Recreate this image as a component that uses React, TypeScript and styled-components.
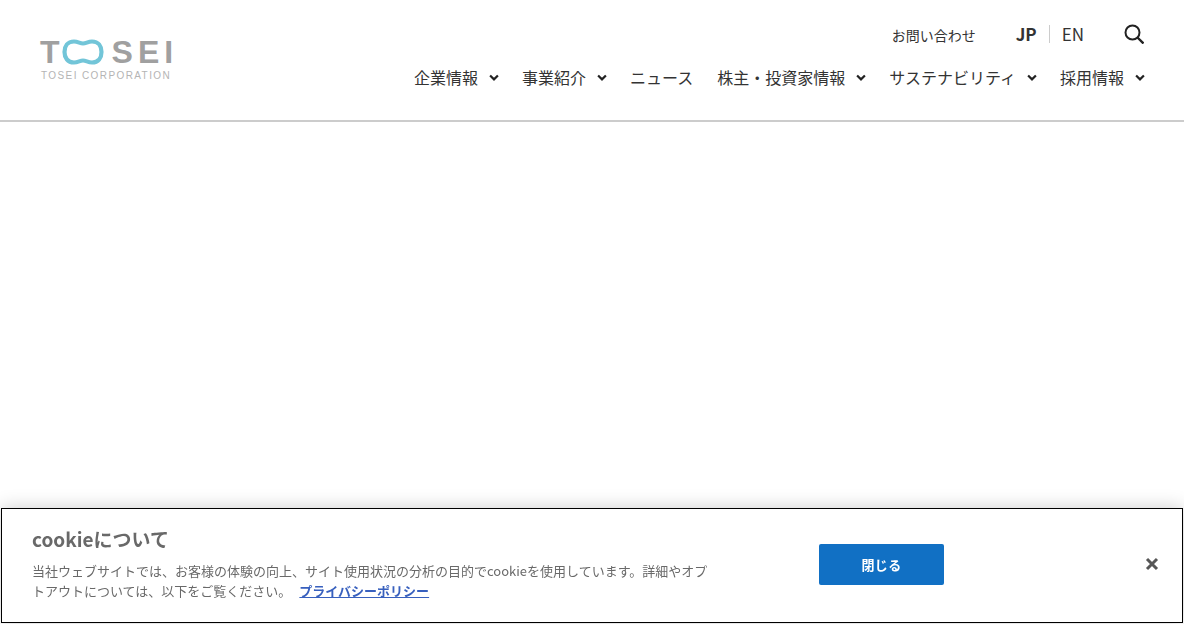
import React from "react";
import styled, { createGlobalStyle } from "styled-components";

const GlobalStyle = createGlobalStyle`
  html, body {
    margin: 0;
    padding: 0;
    background: #fff;
    font-family: "Noto Sans CJK JP", "Noto Sans", sans-serif;
    color: #222;
  }
  * { box-sizing: border-box; }
`;

const Page = styled.div`
  height: 624px;
  overflow: hidden;
`;

const Header = styled.header`
  height: 122px;
  border-bottom: 2px solid #ccc;
  display: flex;
  justify-content: space-between;
  padding: 0 40px;
`;

const Logo = styled.a`
  display: flex;
  flex-direction: column;
  width: 132px;
  margin-top: 38px;
`;

const LogoMark = styled.div`
  display: flex;
  align-items: center;
  height: 28px;
  color: #a0a0a0;
  font-family: "Liberation Sans", sans-serif;
  font-weight: 700;
  font-size: 32px;
  line-height: 28px;
`;

const LogoRing = styled.svg`
  margin-left: 2px;
  flex: none;
`;

const LogoLetters = styled.span`
  letter-spacing: 5px;
  margin-left: 8px;
  white-space: nowrap;
`;

const LogoCaption = styled.span`
  font-family: "Liberation Sans", sans-serif;
  font-size: 10px;
  line-height: 12px;
  letter-spacing: 1.4px;
  color: #b4b4b4;
  margin: 4px 0 0 1px;
  white-space: nowrap;
`;

const Side = styled.div`
  display: flex;
  flex-direction: column;
  align-items: flex-end;
`;

const TopRow = styled.div`
  display: flex;
  align-items: center;
  height: 24px;
  margin-top: 22px;
`;

const ContactLink = styled.a`
  padding-top: 2px;
  font-size: 14px;
  color: #333;
`;

const LangList = styled.div`
  display: flex;
  align-items: center;
  margin-left: 40px;
`;

const Lang = styled.a<{ $active?: boolean }>`
  font-size: 17px;
  font-weight: ${(p) => (p.$active ? 700 : 400)};
  line-height: 18px;
  color: #333;
  padding: ${(p) => (p.$active ? "0 12px 0 0" : "0 0 0 12px")};
  border-left: ${(p) => (p.$active ? "none" : "1px solid #ccc")};
`;

const SearchButton = styled.button`
  display: flex;
  border: none;
  background: none;
  padding: 0;
  margin-left: 40px;
`;

const Nav = styled.nav`
  display: flex;
  align-items: center;
  gap: 24px;
  margin-top: 19px;
`;

const NavItem = styled.a`
  display: flex;
  align-items: center;
  gap: 10px;
  font-size: 16px;
  line-height: 24px;
  color: #333;
  white-space: nowrap;
`;

const CookieBanner = styled.div`
  position: fixed;
  left: 1px;
  right: 1px;
  bottom: 1px;
  height: 115px;
  background: #fff;
  border: 1px solid #000;
  box-shadow: 0 0 18px rgba(0, 0, 0, 0.2);
  display: flex;
  align-items: flex-start;
`;

const CookieText = styled.div`
  width: 680px;
  margin: 16px 10px 0 30px;
  color: #696969;
`;

const CookieTitle = styled.h2`
  margin: 0;
  font-size: 19px;
  font-weight: 700;
  line-height: 28px;
  color: #696969;
`;

const CookieBody = styled.p`
  margin: 8px 0 0;
  font-size: 13px;
  line-height: 19.5px;
`;

const PolicyLink = styled.a`
  margin-left: 8px;
  color: #3860be;
  font-weight: 700;
  text-decoration: underline;
`;

const CloseButton = styled.button`
  width: 125px;
  height: 41px;
  margin: 35px 0 0 97px;
  border: none;
  border-radius: 2px;
  background: #1170c4;
  color: #fff;
  font-family: inherit;
  font-size: 13px;
  font-weight: 700;
  letter-spacing: 0.3px;
`;

const Dismiss = styled.button`
  display: flex;
  margin: 48px 0 0 201px;
  padding: 0;
  border: none;
  background: none;
`;

const navItems = [
  { label: "企業情報", menu: true },
  { label: "事業紹介", menu: true },
  { label: "ニュース", menu: false },
  { label: "株主・投資家情報", menu: true },
  { label: "サステナビリティ", menu: true },
  { label: "採用情報", menu: true },
];

const Chevron = () => (
  <svg width="10" height="8" viewBox="-1 -1 10 8" overflow="visible">
    <path d="M1.1 1.5 5 5.4 8.9 1.5" fill="none" stroke="#222" strokeWidth="2.2" />
  </svg>
);

function App() {
  return (
    <Page>
      <GlobalStyle />
      <Header>
        <Logo>
          <LogoMark>
            T
            <LogoRing width="42" height="26" viewBox="0 0 42 26">
              <path
                d="M12 2.5C16 2.5 18 4.5 21 4.5S26 2.5 30 2.5C36.5 2.5 39.5 7.5 39.5 13S36.5 23.5 30 23.5C26 23.5 24 21.5 21 21.5S16 23.5 12 23.5C5.5 23.5 2.5 18.5 2.5 13S5.5 2.5 12 2.5Z"
                fill="none"
                stroke="#72c5d8"
                strokeWidth="4.2"
              />
            </LogoRing>
            <LogoLetters>SEI</LogoLetters>
          </LogoMark>
          <LogoCaption>TOSEI CORPORATION</LogoCaption>
        </Logo>
        <Side>
          <TopRow>
            <ContactLink>お問い合わせ</ContactLink>
            <LangList>
              <Lang $active>JP</Lang>
              <Lang>EN</Lang>
            </LangList>
            <SearchButton aria-label="検索">
              <svg width="20" height="20" viewBox="0 0 20 20">
                <circle cx="8.5" cy="8.5" r="7" fill="none" stroke="#222" strokeWidth="2" />
                <path d="M13.5 13.5 19.5 19.5" stroke="#222" strokeWidth="2.4" />
              </svg>
            </SearchButton>
          </TopRow>
          <Nav>
            {navItems.map((item) => (
              <NavItem key={item.label}>
                {item.label}
                {item.menu && <Chevron />}
              </NavItem>
            ))}
          </Nav>
        </Side>
      </Header>
      <CookieBanner>
        <CookieText>
          <CookieTitle>cookieについて</CookieTitle>
          <CookieBody>
            当社ウェブサイトでは、お客様の体験の向上、サイト使用状況の分析の目的でcookieを使用しています。詳細やオプトアウトについては、以下をご覧ください。
            <PolicyLink>プライバシーポリシー</PolicyLink>
          </CookieBody>
        </CookieText>
        <CloseButton>閉じる</CloseButton>
        <Dismiss aria-label="閉じる">
          <svg width="14" height="14" viewBox="0 0 14 14">
            <path d="M2 2 12 12M12 2 2 12" stroke="#565656" strokeWidth="3" />
          </svg>
        </Dismiss>
      </CookieBanner>
    </Page>
  );
}

export default App;
